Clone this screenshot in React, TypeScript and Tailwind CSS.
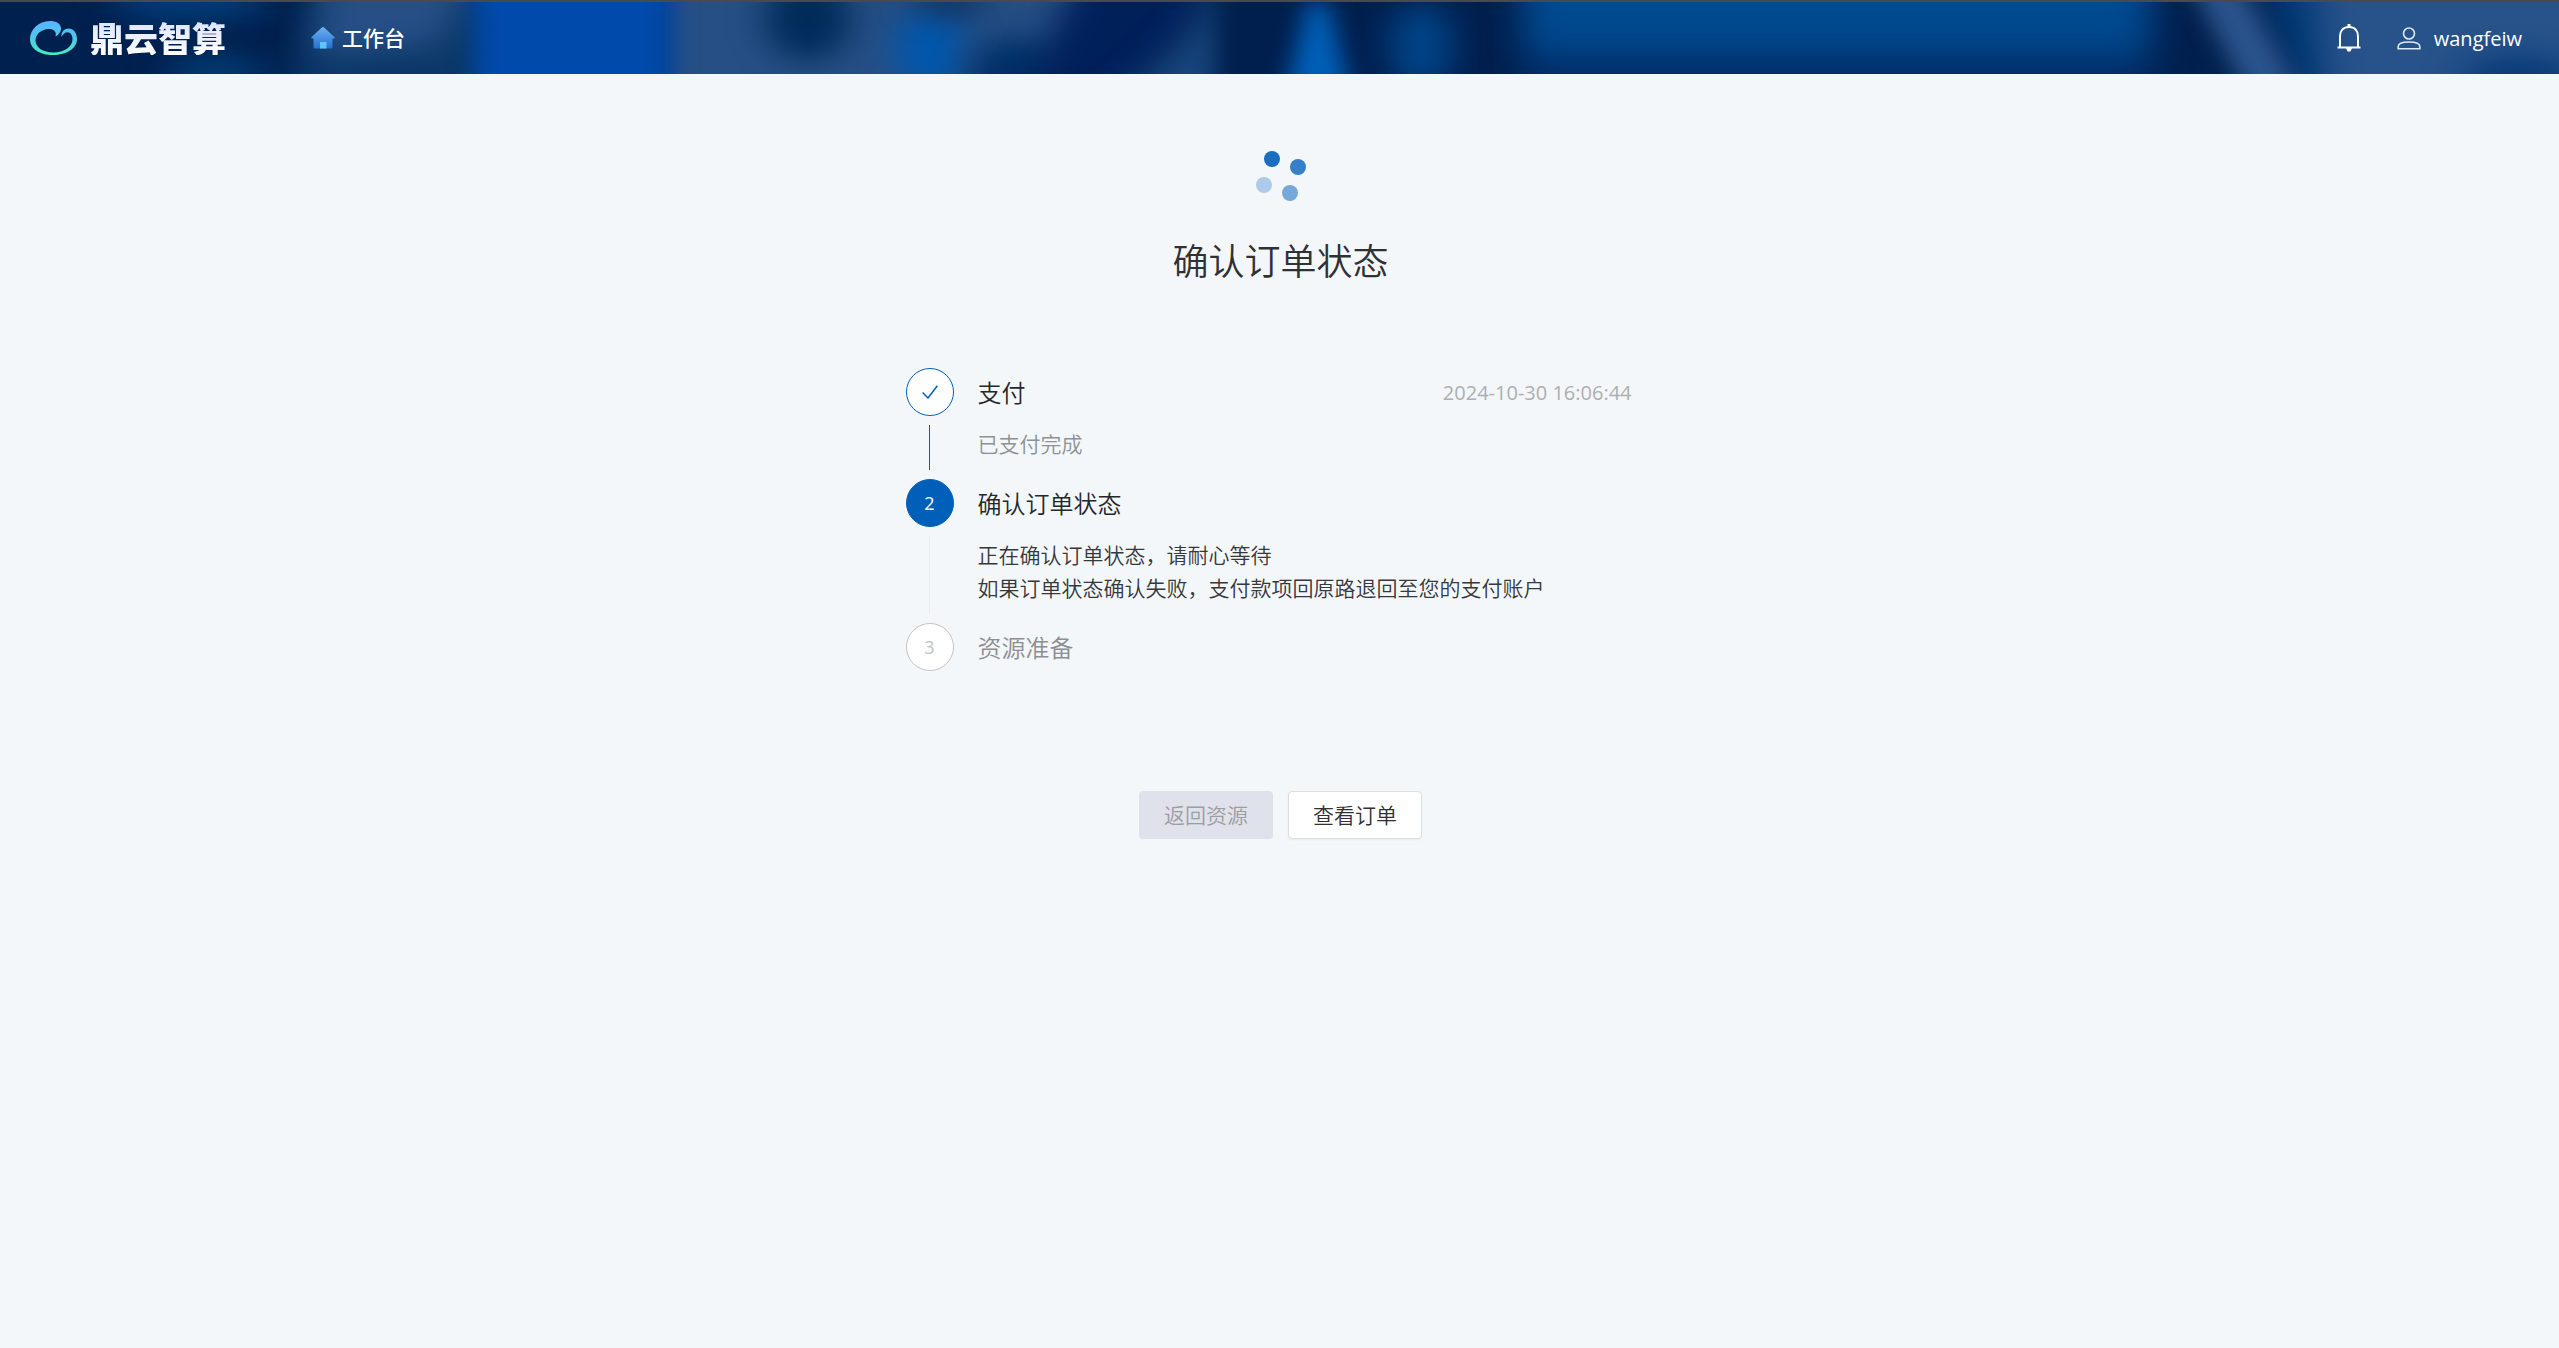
import clsx from 'clsx'

type StepStatus = 'finish' | 'process' | 'wait'

interface Step {
  title: string
  status: StepStatus
  time?: string
  description?: string[]
}

const steps: Step[] = [
  {
    title: '支付',
    status: 'finish',
    time: '2024-10-30 16:06:44',
    description: ['已支付完成'],
  },
  {
    title: '确认订单状态',
    status: 'process',
    description: [
      '正在确认订单状态，请耐心等待',
      '如果订单状态确认失败，支付款项回原路退回至您的支付账户',
    ],
  },
  { title: '资源准备', status: 'wait' },
]

function HeaderBackdrop() {
  return (
    <svg
      className="absolute inset-0 h-full w-full"
      viewBox="0 0 2559 74"
      preserveAspectRatio="none"
      aria-hidden="true"
    >
      <defs>
        <filter id="soft" x="-60%" y="-100%" width="220%" height="300%" colorInterpolationFilters="sRGB">
          <feGaussianBlur stdDeviation="18 14" />
        </filter>
        <filter id="tight" x="-40%" y="-60%" width="180%" height="220%" colorInterpolationFilters="sRGB">
          <feGaussianBlur stdDeviation="12 10" />
        </filter>
        <linearGradient id="band" x1="0" y1="0" x2="0" y2="1">
          <stop offset="0" stopColor="#004b92" />
          <stop offset="0.5" stopColor="#00498e" />
          <stop offset="0.7" stopColor="#002f6b" />
          <stop offset="1" stopColor="#002760" />
        </linearGradient>
      </defs>
      <rect width="2559" height="74" fill="#00204f" />
      <ellipse cx="190" cy="0" rx="80" ry="18" fill="#00407c" filter="url(#soft)" />
      <ellipse cx="215" cy="74" rx="50" ry="20" fill="#003c74" filter="url(#soft)" />
      <path d="M325-40H500V120H280Z" fill="#0b3868" filter="url(#soft)" />
      <path d="M325-40H480L440 44L315 54Z" fill="#274f86" filter="url(#soft)" />
      <path d="M660-50H1120V130H660Z" fill="#264f85" filter="url(#tight)" />
      <ellipse cx="808" cy="16" rx="42" ry="44" fill="#002a58" filter="url(#soft)" />
      <ellipse cx="930" cy="50" rx="34" ry="44" fill="#0057ad" filter="url(#soft)" />
      <ellipse cx="950" cy="0" rx="36" ry="14" fill="#0a3060" filter="url(#soft)" />
      <ellipse cx="1015" cy="76" rx="46" ry="40" fill="#003068" filter="url(#soft)" />
      <path d="M1085-40H1210V30L1090 120H1010Z" fill="#00205a" filter="url(#soft)" />
      <path d="M1225-40V120H1100L1190 30Z" fill="#17467c" filter="url(#soft)" />
      <rect x="474" y="-50" width="198" height="180" fill="#004aab" filter="url(#tight)" />
      <rect x="1222" y="-50" width="320" height="180" fill="#001f4e" filter="url(#tight)" />
      <path d="M1308 0H1328L1350 90H1286Z" fill="#0060b8" filter="url(#tight)" />
      <ellipse cx="1421" cy="46" rx="32" ry="46" fill="#004488" filter="url(#soft)" />
      <rect x="1522" y="-40" width="630" height="154" fill="url(#band)" filter="url(#soft)" />
      <path d="M2250-50H2640V130H2310Z" fill="#003a76" filter="url(#soft)" />
      <path d="M2310-50H2640V130H2330Z" fill="#27528a" filter="url(#soft)" />
      <ellipse cx="2520" cy="78" rx="60" ry="22" fill="#063a78" filter="url(#soft)" />
      <path d="M2185-30H2235L2310 110H2255Z" fill="#2b548c" filter="url(#tight)" />
    </svg>
  )
}

function LogoMark() {
  return (
    <svg className="h-[34px] w-12" viewBox="0 0 48 34" aria-hidden="true">
      <defs>
        <linearGradient id="logo" x1="0" y1="0" x2="0" y2="1">
          <stop offset="0" stopColor="#58b4ff" />
          <stop offset="0.5" stopColor="#4fc8e8" />
          <stop offset="1" stopColor="#45eebc" />
        </linearGradient>
      </defs>
      <path
        fill="url(#logo)"
        d="M25.500 15.500C29.500 13.500 31.500 9.500 31 6.500C30 2 25.500 0 20 0C8.500 0 0 8.500 0 18C0 28 10 34 23 34C36.500 34 47 27.500 47 18C47 11.500 43 7.500 38.500 7.500C34.500 7.500 31 10.500 31.500 16C33 13 35.200 11.200 37.500 11.200C40.500 11.200 42.500 14 42.500 18C42.500 26 34 31.500 23.500 31.500C13 31.500 5.500 26.500 5.500 19.500C5.500 13 12 8 18.500 8C24 8 26.800 10.500 25.500 15.500Z"
      />
    </svg>
  )
}

function HomeIcon() {
  return (
    <svg className="h-[22px] w-6" viewBox="0 0 24 22" aria-hidden="true">
      <defs>
        <linearGradient id="home" x1="0" y1="0" x2="0" y2="1">
          <stop offset="0" stopColor="#6db0f2" />
          <stop offset="1" stopColor="#2272cf" />
        </linearGradient>
      </defs>
      <path
        fill="url(#home)"
        d="M10.800.5Q12-.4 13.200.5L23.600 10.200Q24 11.600 22.600 11.600H21.500V20Q21.500 21.500 20 21.500H4Q2.500 21.500 2.500 20V11.600H1.400Q0 11.600.4 10.200Z"
      />
      <path fill="#5fc4fb" d="M9 15h6.500v6.500H9z" />
    </svg>
  )
}

function BellIcon() {
  return (
    <svg className="h-7 w-6" viewBox="0 0 24 28" fill="none" stroke="#fff" strokeWidth="2" aria-hidden="true">
      <path d="M3 23V12.500C3 6.500 6.500 3 12 3S21 6.500 21 12.500V23" />
      <path d="M.5 23.500H23.500" />
      <path d="M12 0V3" strokeWidth="3" />
      <path d="M9 24H15L13.500 27.500H10.500Z" fill="#fff" stroke="none" />
    </svg>
  )
}

function UserIcon() {
  return (
    <svg className="h-[23px] w-6" viewBox="0 0 24 23" fill="none" stroke="#dce9f8" strokeWidth="1.600" aria-hidden="true">
      <circle cx="12" cy="6.500" r="5.500" />
      <path d="M1.200 21.800V19.500C1.200 16.500 5.500 15 12 15S22.800 16.500 22.800 19.500V21.800Z" />
    </svg>
  )
}

function Spinner() {
  return (
    <svg className="size-[52px]" viewBox="0 0 52 52" role="img" aria-label="加载中">
      <circle cx="17" cy="9" r="8" fill="#1a6dbf" />
      <circle cx="43" cy="17" r="8" fill="#3580c9" />
      <circle cx="35" cy="43" r="8" fill="#76a8dc" />
      <circle cx="9" cy="35" r="8" fill="#adcae9" />
    </svg>
  )
}

function StepItem({ step, index, last }: { step: Step; index: number; last: boolean }) {
  const { title, status, time, description } = step

  return (
    <li className="flex gap-6">
      <div className="flex flex-col items-center">
        <div
          className={clsx(
            'flex size-12 shrink-0 items-center justify-center rounded-full border text-lg font-normal',
            status === 'finish' && 'border-[#0060b9] bg-white text-[#0060b9]',
            status === 'process' && 'border-[#0060b9] bg-[#0060b9] text-white',
            status === 'wait' && 'border-[#c4c4c6] bg-white text-[#c0c2c4]'
          )}
        >
          {status === 'finish' ? (
            <svg className="h-[14px] w-4" viewBox="0 0 16 14" fill="none" stroke="currentColor" strokeWidth="1.500" aria-label="已完成">
              <path d="M.6 7.500L6 13L15.400.8" />
            </svg>
          ) : (
            index + 1
          )}
        </div>
        {!last && (
          <div
            className={clsx(
              'my-[9px] w-px flex-1',
              status === 'finish' ? 'bg-[#0060b9]' : 'bg-[#e9edf1]'
            )}
          />
        )}
      </div>
      <div className="flex-1">
        <div className="flex h-12 items-center justify-between pt-0.5 pr-6">
          <h2 className={clsx('text-2xl', status === 'wait' ? 'text-[#8c8e90]' : 'text-[#262729]')}>
            {title}
          </h2>
          {time && <time className="text-xl font-normal text-[#adafb1]">{time}</time>}
        </div>
        {description && (
          <div
            className={clsx(
              'pt-3 pb-[18px] text-[21px] leading-[33px]',
              status === 'process' ? 'text-[#37383a]' : 'text-[#8f9193]'
            )}
          >
            {description.map((line) => (
              <p key={line}>{line}</p>
            ))}
          </div>
        )}
      </div>
    </li>
  )
}

export default function App() {
  return (
    <div className="min-h-screen bg-[#f3f7fa] font-['Open_Sans','Noto_Sans_CJK_SC',sans-serif] font-[350] text-[#303133]">
      <header className="relative overflow-hidden border-t-2 border-[#464b4b] text-white">
        <HeaderBackdrop />
        <div className="relative flex h-[72px] items-center pr-[37px] pl-[30px]">
          <a href="#" className="flex items-center gap-3">
            <LogoMark />
            <span className="bg-linear-to-b from-[#dde4ff] to-white bg-clip-text font-['Noto_Sans_CJK_SC',sans-serif] text-[34px] leading-none font-black text-transparent">
              鼎云智算
            </span>
          </a>
          <nav className="ml-[85px]">
            <a href="#" className="flex items-center gap-[7px] text-[21px] font-medium">
              <HomeIcon />
              <span className="pt-0.5">工作台</span>
            </a>
          </nav>
          <div className="ml-auto flex items-center gap-9">
            <button type="button" aria-label="消息">
              <BellIcon />
            </button>
            <button type="button" className="flex items-center gap-[13px] text-xl font-normal">
              <UserIcon />
              <span className="pt-0.5">wangfeiw</span>
            </button>
          </div>
        </div>
      </header>

      <main className="flex flex-col items-center pt-[76px] pl-0.5">
        <Spinner />
        <h1 className="mt-[33px] text-4xl leading-[54px]">确认订单状态</h1>

        <ol className="mt-[79px] w-full max-w-[750px]">
          {steps.map((step, i) => (
            <StepItem key={step.title} step={step} index={i} last={i === steps.length - 1} />
          ))}
        </ol>

        <div className="mt-[120px] flex gap-[15px] text-[21px]">
          <button
            type="button"
            disabled
            className="h-12 rounded-sm bg-[#dfe2ea] px-[25px] pt-0.5 text-[#9b9da0]"
          >
            返回资源
          </button>
          <button
            type="button"
            className="h-12 rounded-sm border border-[#dcdee3] bg-white px-6 pt-0.5 shadow-xs"
          >
            查看订单
          </button>
        </div>
      </main>
    </div>
  )
}
